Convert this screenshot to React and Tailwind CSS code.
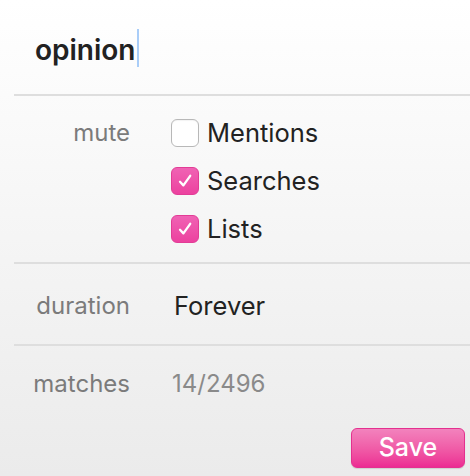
const font = { fontFamily: 'Inter, "Liberation Sans", sans-serif' };

function Check({ checked }) {
  if (!checked) {
    return (
      <span className="w-[28px] h-[28px] rounded-[6px] border border-[#b8b8b8] bg-white shadow-[inset_0_1px_1px_rgba(0,0,0,0.05)] shrink-0" />
    );
  }
  return (
    <span className="w-[28px] h-[28px] rounded-[6px] bg-gradient-to-b from-[#f062b4] to-[#ec419f] border border-[#e23c96] flex items-center justify-center shrink-0">
      <svg width="18" height="18" viewBox="0 0 18 18" fill="none">
        <path d="M4 9.8 L7.4 13.4 L14.2 3.8" stroke="white" strokeWidth="2.3" strokeLinecap="round" strokeLinejoin="round" />
      </svg>
    </span>
  );
}

function Divider() {
  return <div className="ml-[14px] h-[2px] bg-[#dedede]" />;
}

export default function App() {
  const options = [
    { label: 'Mentions', checked: false },
    { label: 'Searches', checked: true },
    { label: 'Lists', checked: true },
  ];

  return (
    <div
      className="w-[470px] h-[476px] flex flex-col bg-gradient-to-b from-[#ffffff] to-[#ebebeb] text-[#222]"
      style={font}
    >
      {/* Title input */}
      <div className="h-[94px] flex items-center pl-[35px] pt-[5px]">
        <span className="text-[28px] font-semibold text-[#222]">opinion</span>
        <span className="w-[2px] h-[38px] bg-[#a9cdf8] ml-[1px] -mt-[3px]" />
      </div>
      <Divider />

      {/* Mute */}
      <div className="flex pt-[13px] pb-[9px]">
        <div className="w-[130px] h-[48px] flex items-center justify-end text-[24px] text-[#7b7b7b]">mute</div>
        <div className="flex flex-col pl-[41px]">
          {options.map((o) => (
            <div key={o.label} className="h-[48px] flex items-center gap-[8px]">
              <Check checked={o.checked} />
              <span className="text-[25.5px] text-[#222]">{o.label}</span>
            </div>
          ))}
        </div>
      </div>
      <Divider />

      {/* Duration */}
      <div className="h-[80px] flex items-center pt-[4px]">
        <div className="w-[130px] text-right text-[24px] text-[#7b7b7b]">duration</div>
        <div className="pl-[44px] text-[25.5px] text-[#222]">Forever</div>
      </div>
      <Divider />

      {/* Matches */}
      <div className="h-[76px] flex items-center">
        <div className="w-[130px] text-right text-[24px] text-[#7b7b7b]">matches</div>
        <div className="pl-[42px] text-[24px] text-[#8a8a8a]">14/2496</div>
      </div>

      <div className="flex justify-end pr-[5px] pt-[6px]">
        <button className="w-[114px] h-[40px] rounded-[6px] bg-gradient-to-b from-[#f282bd] to-[#ec2a93] border border-[#e4308f] text-white text-[25px] font-medium flex items-center justify-center shadow-[0_1px_1px_rgba(0,0,0,0.12)]">
          Save
        </button>
      </div>
    </div>
  );
}
